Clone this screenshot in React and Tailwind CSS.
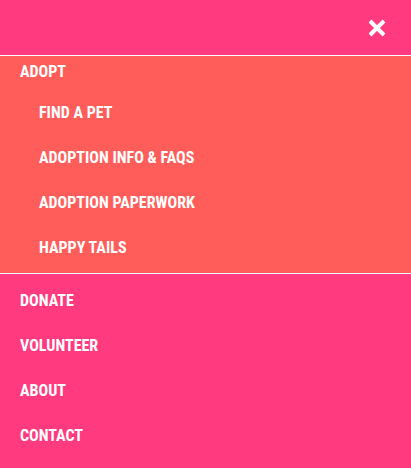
const subLinks = ['FIND A PET', 'ADOPTION INFO & FAQS', 'ADOPTION PAPERWORK', 'HAPPY TAILS'];
const mainLinks = ['DONATE', 'VOLUNTEER', 'ABOUT', 'CONTACT'];

const CloseIcon = () => (
  <svg width="20" height="20" viewBox="0 0 20 20" fill="none">
    <path d="M3 3L17 17M17 3L3 17" stroke="#fff" strokeWidth="4" strokeLinecap="butt" />
  </svg>
);

export default function App() {
  return (
    <div className="min-h-[468px] bg-[#ff3a7e] text-white font-['Roboto',sans-serif] font-bold font-stretch-semi-condensed text-[16px] leading-[20px]">
      {/* header */}
      <div className="h-[56px] flex items-center justify-end pr-[24px] border-b border-white">
        <button className="pt-[1px]">
          <CloseIcon />
        </button>
      </div>

      {/* open submenu */}
      <div className="bg-[#ff5d59] border-b border-white pb-[3px]">
        <div className="pl-[20px] pt-[6px] pb-[8px]">ADOPT</div>
        <ul>
          {subLinks.map((l) => (
            <li key={l} className="h-[45px] flex items-center pl-[39px]">{l}</li>
          ))}
        </ul>
      </div>

      <ul className="pt-[4px]">
        {mainLinks.map((l) => (
          <li key={l} className="h-[45px] flex items-center pl-[20px]">{l}</li>
        ))}
      </ul>
    </div>
  );
}
